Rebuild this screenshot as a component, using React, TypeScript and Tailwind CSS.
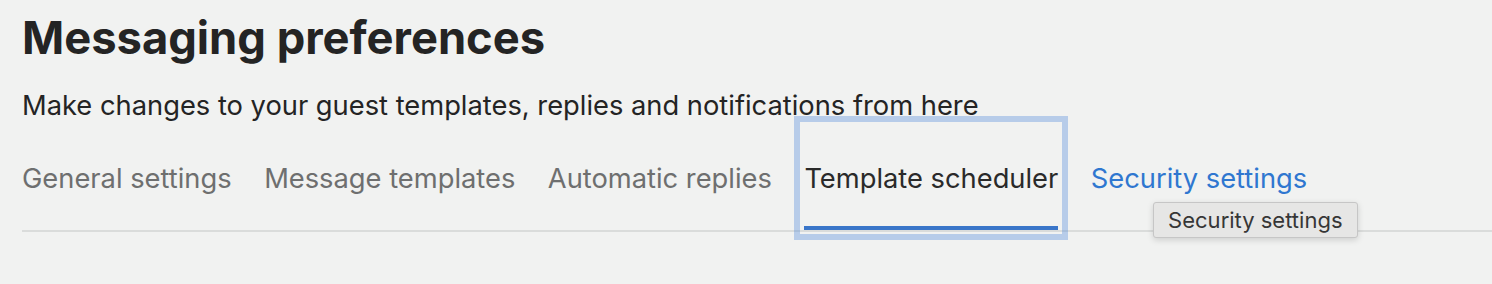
const tabs = [
  "General settings",
  "Message templates",
  "Automatic replies",
  "Template scheduler",
  "Security settings",
];

export default function App() {
  const active = "Template scheduler";
  const hovered = "Security settings";

  return (
    <div
      className="min-h-screen bg-[#f1f2f1] pl-[22px] pt-[11px] text-[#242424]"
      style={{ fontFamily: "Inter, 'Noto Sans', sans-serif" }}
    >
      <h1 className="text-[45.3px] leading-[54px] font-bold">Messaging preferences</h1>
      <p className="mt-[25px] text-[27.3px] leading-[32px]">
        Make changes to your guest templates, replies and notifications from here
      </p>

      <nav className="mt-[4px] flex gap-[32.5px] border-b-2 border-[#dadcdb]">
        {tabs.map((t) => {
          const isActive = t === active;
          const isHover = t === hovered;
          return (
            <div key={t} className="relative">
              <button
                className={
                  "h-[104px] pt-[6px] text-[27.3px] whitespace-nowrap border-b-4 " +
                  (isActive
                    ? "border-[#3a76c9] text-[#2a2a2a] outline-[6px] outline-solid outline-[rgba(75,136,218,0.35)] outline-offset-[4px]"
                    : isHover
                    ? "border-transparent text-[#2f77d0]"
                    : "border-transparent text-[#6e6f6f]")
                }
              >
                {t}
              </button>
              {isHover && (
                <div className="absolute left-[62px] top-[76px] h-[36px] w-[205px] flex items-center justify-center rounded-[3px] border border-[#c6c6c6] bg-[#e6e6e5] text-[22px] text-[#363636] shadow-[0_2px_6px_rgba(0,0,0,0.15)] whitespace-nowrap">
                  Security settings
                </div>
              )}
            </div>
          );
        })}
      </nav>
    </div>
  );
}
